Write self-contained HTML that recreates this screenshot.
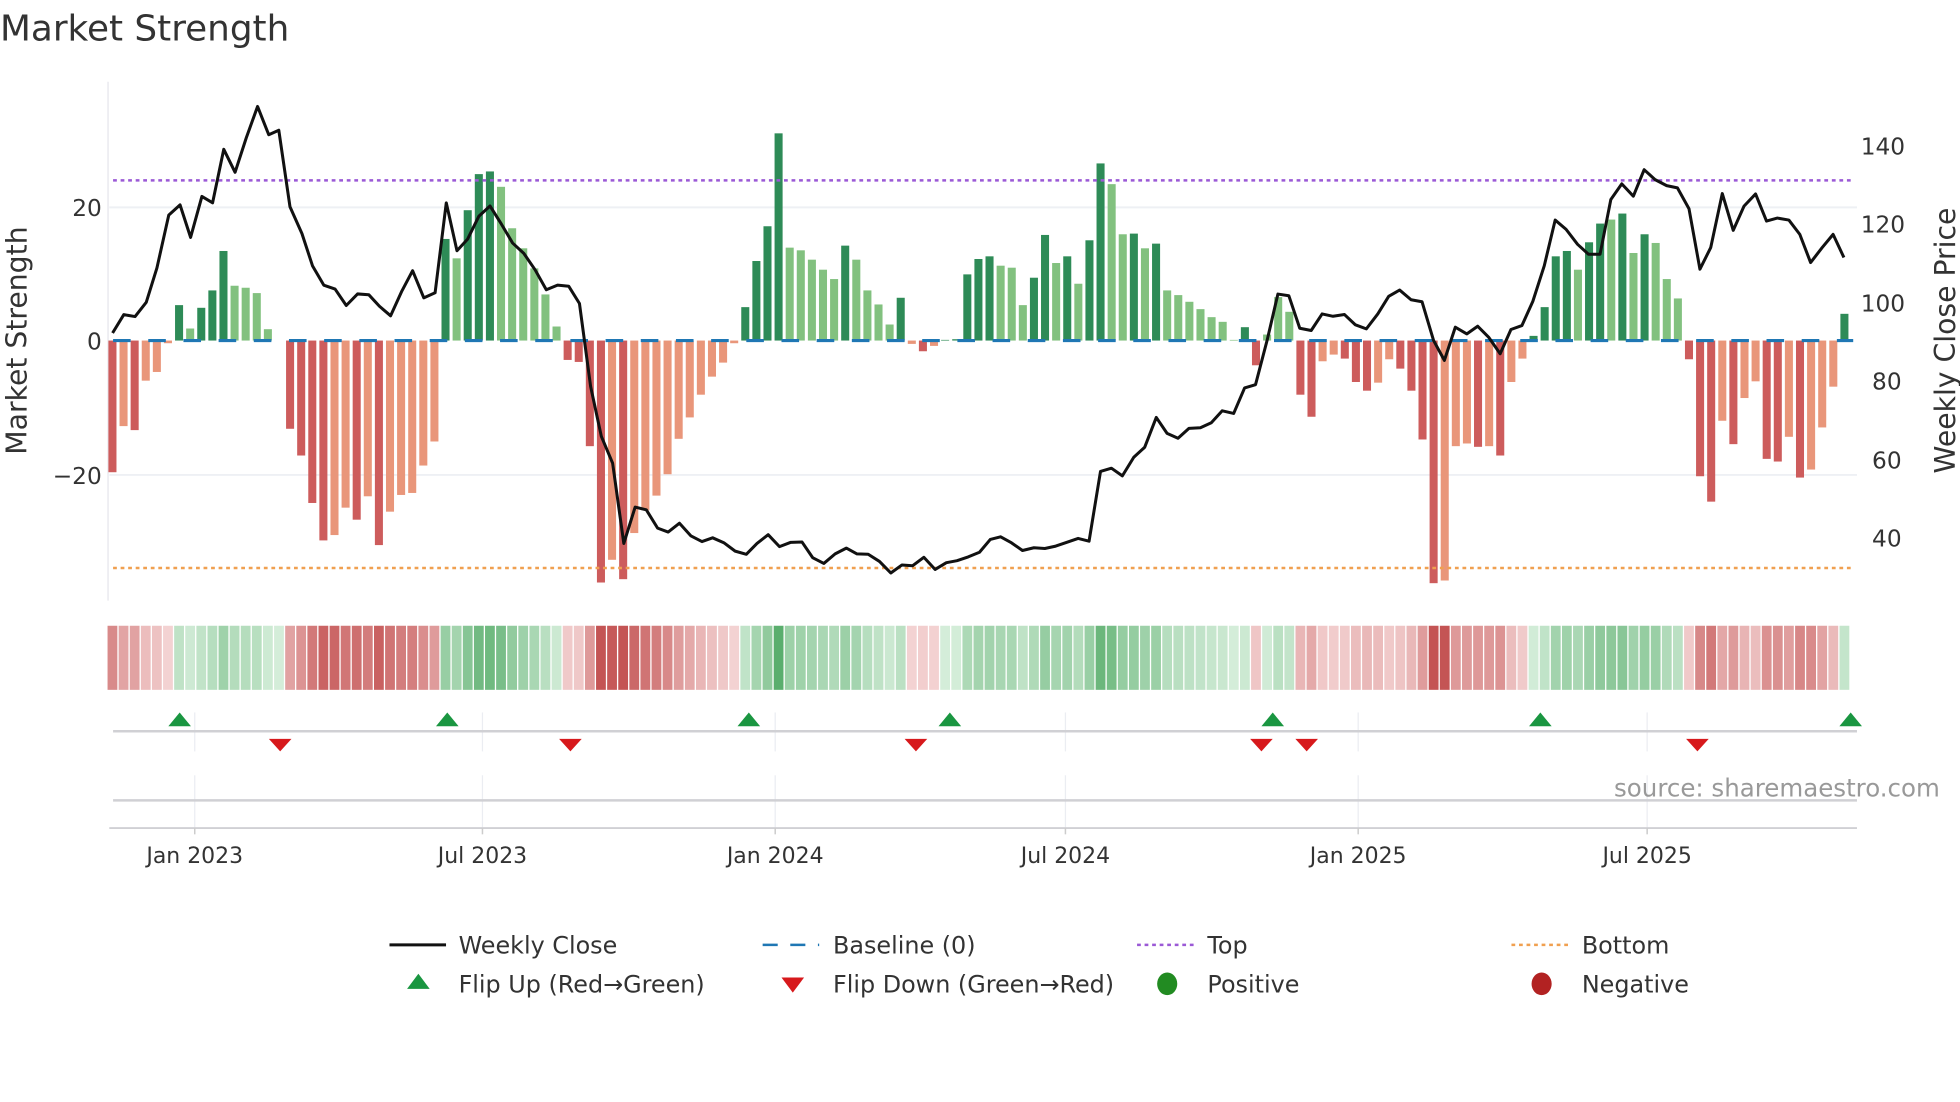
<!DOCTYPE html>
<html><head><meta charset="utf-8"><style>
html,body{margin:0;padding:0;background:#fff;width:1960px;height:1102px;overflow:hidden}
svg{display:block}
text{font-family:"DejaVu Sans","Liberation Sans",sans-serif;fill:#333}
</style></head><body>
<svg id="s" width="1960" height="1102" viewBox="0 0 1560 877" xmlns="http://www.w3.org/2000/svg">
<text x="0" y="32" font-size="28.5">Market Strength</text>
<line x1="86" y1="65" x2="86" y2="478" stroke="#e6e6ec" stroke-width="1"/>
<line x1="87" y1="165" x2="1478" y2="165" stroke="#eef0f4" stroke-width="1.5"/>
<line x1="87" y1="378" x2="1478" y2="378" stroke="#eef0f4" stroke-width="1.5"/>
<g font-size="18.5" text-anchor="end">
<text x="81" y="172">20</text><text x="81" y="278">0</text><text x="81" y="385">−20</text>
</g>
<g font-size="18.5">
<text x="1481" y="123">140</text><text x="1481" y="185">120</text><text x="1481" y="248">100</text>
<text x="1490" y="310">80</text><text x="1490" y="373">60</text><text x="1490" y="435">40</text>
</g>
<text font-size="22.5" text-anchor="middle" transform="translate(21,271) rotate(-90)">Market Strength</text>
<text font-size="22.5" text-anchor="middle" transform="translate(1556,271) rotate(-90)">Weekly Close Price</text>
<g id="bars"></g>
<line x1="90" y1="271" x2="1475" y2="271" stroke="#1f77b4" stroke-width="2.5" stroke-dasharray="14,14"/>
<line x1="90" y1="143.5" x2="1475" y2="143.5" stroke="#9b59d6" stroke-width="2" stroke-dasharray="3,3"/>
<line x1="90" y1="452" x2="1475" y2="452" stroke="#f0a050" stroke-width="2" stroke-dasharray="3,3"/>
<polyline id="price" fill="none" stroke="#111" stroke-width="2.4" stroke-linejoin="round"/>
<g id="strip"></g>
<g id="grid" stroke="#ebedf2" stroke-width="1"></g>
<line x1="90" y1="582" x2="1478" y2="582" stroke="#d0d0d4" stroke-width="2"/>
<line x1="90" y1="637" x2="1478" y2="637" stroke="#d0d0d4" stroke-width="2"/>
<line x1="87" y1="659" x2="1478" y2="659" stroke="#d0d0d4" stroke-width="1.5"/>
<g id="marks"></g>
<text x="1544" y="634" font-size="19.5" text-anchor="end" style="fill:#999">source: sharemaestro.com</text>
<g id="ticks" font-size="17.5" text-anchor="middle"></g>
<g font-size="19">
<line x1="310" y1="752" x2="355" y2="752" stroke="#111" stroke-width="2.4"/>
<text x="365" y="759">Weekly Close</text>
<line x1="607" y1="752" x2="652" y2="752" stroke="#1f77b4" stroke-width="2" stroke-dasharray="12,10"/>
<text x="663" y="759">Baseline (0)</text>
<line x1="905" y1="752" x2="950" y2="752" stroke="#9b59d6" stroke-width="2" stroke-dasharray="3,3"/>
<text x="961" y="759">Top</text>
<line x1="1203" y1="752" x2="1248" y2="752" stroke="#f0a050" stroke-width="2" stroke-dasharray="3,3"/>
<text x="1259" y="759">Bottom</text>
<polygon points="324,787 342,787 333,775" fill="#1a9641"/>
<text x="365" y="790">Flip Up (Red→Green)</text>
<polygon points="622,778 640,778 631,790" fill="#d7191c"/>
<text x="663" y="790">Flip Down (Green→Red)</text>
<ellipse cx="929" cy="783" rx="8" ry="9" fill="#228b22"/>
<text x="961" y="790">Positive</text>
<ellipse cx="1227" cy="783" rx="8" ry="9" fill="#b22222"/>
<text x="1259" y="790">Negative</text>
</g>
</svg>
<script>
var NS="http://www.w3.org/2000/svg";
function el(t,a,p){var e=document.createElementNS(NS,t);for(var k in a)e.setAttribute(k,a[k]);p.appendChild(e);return e;}
var B=[[-19.7,1],[-12.8,0],[-13.4,1],[-6,0],[-4.7,0],[-0.4,0],[5.3,1],[1.8,0],[4.9,1],[7.5,1],[13.4,1],[8.2,0],[7.9,0],[7.1,0],[1.7,0],[0,0],
[-13.2,1],[-17.2,1],[-24.3,1],[-29.9,1],[-29.1,0],[-25,0],[-26.8,1],[-23.3,0],[-30.6,1],[-25.6,0],[-23.1,0],[-22.8,0],[-18.7,0],[-15.1,0],
[15.2,1],[12.3,0],[19.5,1],[24.9,1],[25.3,1],[23,0],[16.8,0],[13.8,0],[10.8,0],[6.9,0],[2.1,0],
[-2.9,1],[-3.2,1],[-15.8,1],[-36.2,1],[-32.8,0],[-35.7,1],[-28.8,0],[-25.4,0],[-23.2,0],[-20,0],[-14.7,0],[-11.5,0],[-8.1,0],[-5.4,0],[-3.3,0],[-0.4,0],
[5,1],[11.9,1],[17.1,1],[31,1],[13.9,0],[13.5,0],[12.1,0],[10.6,0],[9.2,0],[14.2,1],[12.1,0],[7.5,0],[5.4,0],[2.4,0],[6.4,1],
[-0.5,0],[-1.6,1],[-0.8,0],[0.1,1],[0.2,1],[9.9,1],[12.2,1],
[12.6,1],[11.2,0],[10.9,0],[5.3,0],[9.4,1],[15.8,1],[11.6,0],[12.6,1],[8.5,0],[15,1],[26.5,1],[23.4,0],[15.9,0],[16,1],[13.8,0],[14.5,1],[7.5,0],[6.8,0],[5.8,0],[4.7,0],[3.5,0],[2.8,0],[0.1,0],[2,1],
[-3.7,1],[0.9,0],[6.5,0],[4.3,0],
[-8.1,1],[-11.4,1],[-3.1,0],[-2.1,0],[-2.7,1],[-6.2,1],[-7.5,1],[-6.3,0],[-2.8,0],[-4.2,1],[-7.5,1],[-14.8,1],[-36.3,1],[-35.9,0],[-15.8,0],[-15.4,0],[-15.9,1],[-15.8,0],[-17.2,1],[-6.2,0],[-2.7,0],
[0.7,1],[5,1],[12.6,1],[13.4,1],[10.6,0],[14.7,1],[17.5,1],[18.1,0],[19,1],[13.1,0],[15.9,1],[14.6,0],[9.2,0],[6.3,0],
[-2.8,1],[-20.3,1],[-24.1,1],[-12,0],[-15.5,1],[-8.6,0],[-6.1,0],[-17.7,1],[-18.1,1],[-14.4,0],[-20.5,1],[-19.3,0],[-13,0],[-6.9,0],[4,1]];
var n=B.length,x0=89.5,dx=(1468-89.5)/(n-1),u=5.32;
var gb=document.getElementById('bars'),gs=document.getElementById('strip');
function mix(a,b,t){return 'rgb('+a.map(function(v,i){return Math.round(v+(b[i]-v)*t)}).join(',')+')';}
for(var i=0;i<n;i++){var v=B[i][0],d=B[i][1],x=x0+i*dx,h=Math.abs(v)*u;
 var c=v>=0?(d?'#2e8b57':'#82c17f'):(d?'#cd5c5c':'#e9967a');
 if(h>0.3) el('rect',{x:x-3.2,y:v>=0?271-h:271,width:6.4,height:h,fill:c},gb);
 var t=Math.min(Math.abs(v)/34,1);
 var sc=v>=0?mix([212,237,217],[78,168,98],t):mix([244,212,212],[196,84,84],t);
 el('rect',{x:x-3.9,y:498,width:7.8,height:51,fill:sc},gs);
}
var P1=[[180,870],[198,822],[216,827],[234,790],[251,700],[270,562],[288,535],[305,620],[323,513],[340,530],[358,390],[376,450],[394,360],[412,278],[430,352],[446,340],[464,540],[483,610],[500,695],[518,745],[536,755],[554,798],[572,768],[590,770],[607,800],[625,825],[643,760],[660,707],[678,778],[696,765],[714,530],[731,655],[748,625],[766,565],[784,538],[802,585],[820,635],[838,662],[856,705],[874,757],[892,745],[910,748],[927,793],[945,1010],[962,1140],[980,1210],[998,1420],[1016,1325],[1034,1332],[1052,1380],[1069,1390],[1087,1367],[1105,1400],[1123,1415],[1140,1405],[1158,1418],[1176,1440],[1194,1448],[1211,1420],[1229,1397],[1247,1428],[1265,1417],[1283,1416],[1300,1457],[1318,1472],[1336,1447],[1354,1432],[1371,1447],[1389,1448],[1407,1467],[1425,1497],[1443,1476],[1460,1478],[1478,1456],[1496,1488],[1514,1470],[1531,1465],[1549,1455],[1567,1443]];
var P2=[[18,1385],[36,1377],[55,1395],[74,1418],[94,1410],[113,1412],[132,1405],[152,1393],[171,1382],[190,1390],[210,1180],[229,1170],[248,1193],[268,1137],[287,1107],[307,1017],[326,1065],[345,1080],[364,1050],[384,1048],[403,1033],[422,997],[442,1005],[461,928],[480,918],[500,785],[519,645],[538,650],[557,748],[577,755],[596,705],[615,712],[635,707],[654,738],[673,750],[693,705],[712,652],[731,633],[751,662],[770,668],[790,785],[809,845],[828,745],[848,765],[867,742],[886,775],[906,825],[925,752],[944,740],[963,667],[983,560],[1002,422],[1021,450],[1041,495],[1060,525],[1080,525],[1099,360],[1118,313],[1138,350],[1157,270],[1176,300],[1196,318],[1215,325],[1235,388],[1254,570],[1273,505],[1293,342],[1312,453],[1331,380],[1351,343],[1370,425],[1389,416],[1409,422],[1428,465],[1447,550],[1467,505],[1486,465],[1505,535]];
var pts=P1.map(function(p){return (p[0]/2.01).toFixed(1)+','+(p[1]/3.283).toFixed(1)}).concat(P2.map(function(p){return (p[0]*0.4569+780).toFixed(1)+','+(p[1]*0.264+63.7).toFixed(1)}));
document.getElementById('price').setAttribute('points',pts.join(' '));
var gg=document.getElementById('grid'),gt=document.getElementById('ticks');
var T=[[155,'Jan 2023'],[384,'Jul 2023'],[617,'Jan 2024'],[848,'Jul 2024'],[1081,'Jan 2025'],[1311,'Jul 2025']];
T.forEach(function(t){el('line',{x1:t[0],y1:567,x2:t[0],y2:598},gg);el('line',{x1:t[0],y1:617,x2:t[0],y2:659},gg);
 el('line',{x1:t[0],y1:659,x2:t[0],y2:664,stroke:'#ccc','stroke-width':1.2},gt);
 var tx=el('text',{x:t[0],y:687},gt);tx.textContent=t[1];});
var gm=document.getElementById('marks');
[143,356,596,756,1013,1226,1473].forEach(function(x){el('polygon',{points:(x-9)+',578 '+(x+9)+',578 '+x+',567',fill:'#1a9641'},gm);});
[223,454,729,1004,1040,1351].forEach(function(x){el('polygon',{points:(x-9)+',588 '+(x+9)+',588 '+x+',598',fill:'#d7191c'},gm);});
</script>
</body></html>
